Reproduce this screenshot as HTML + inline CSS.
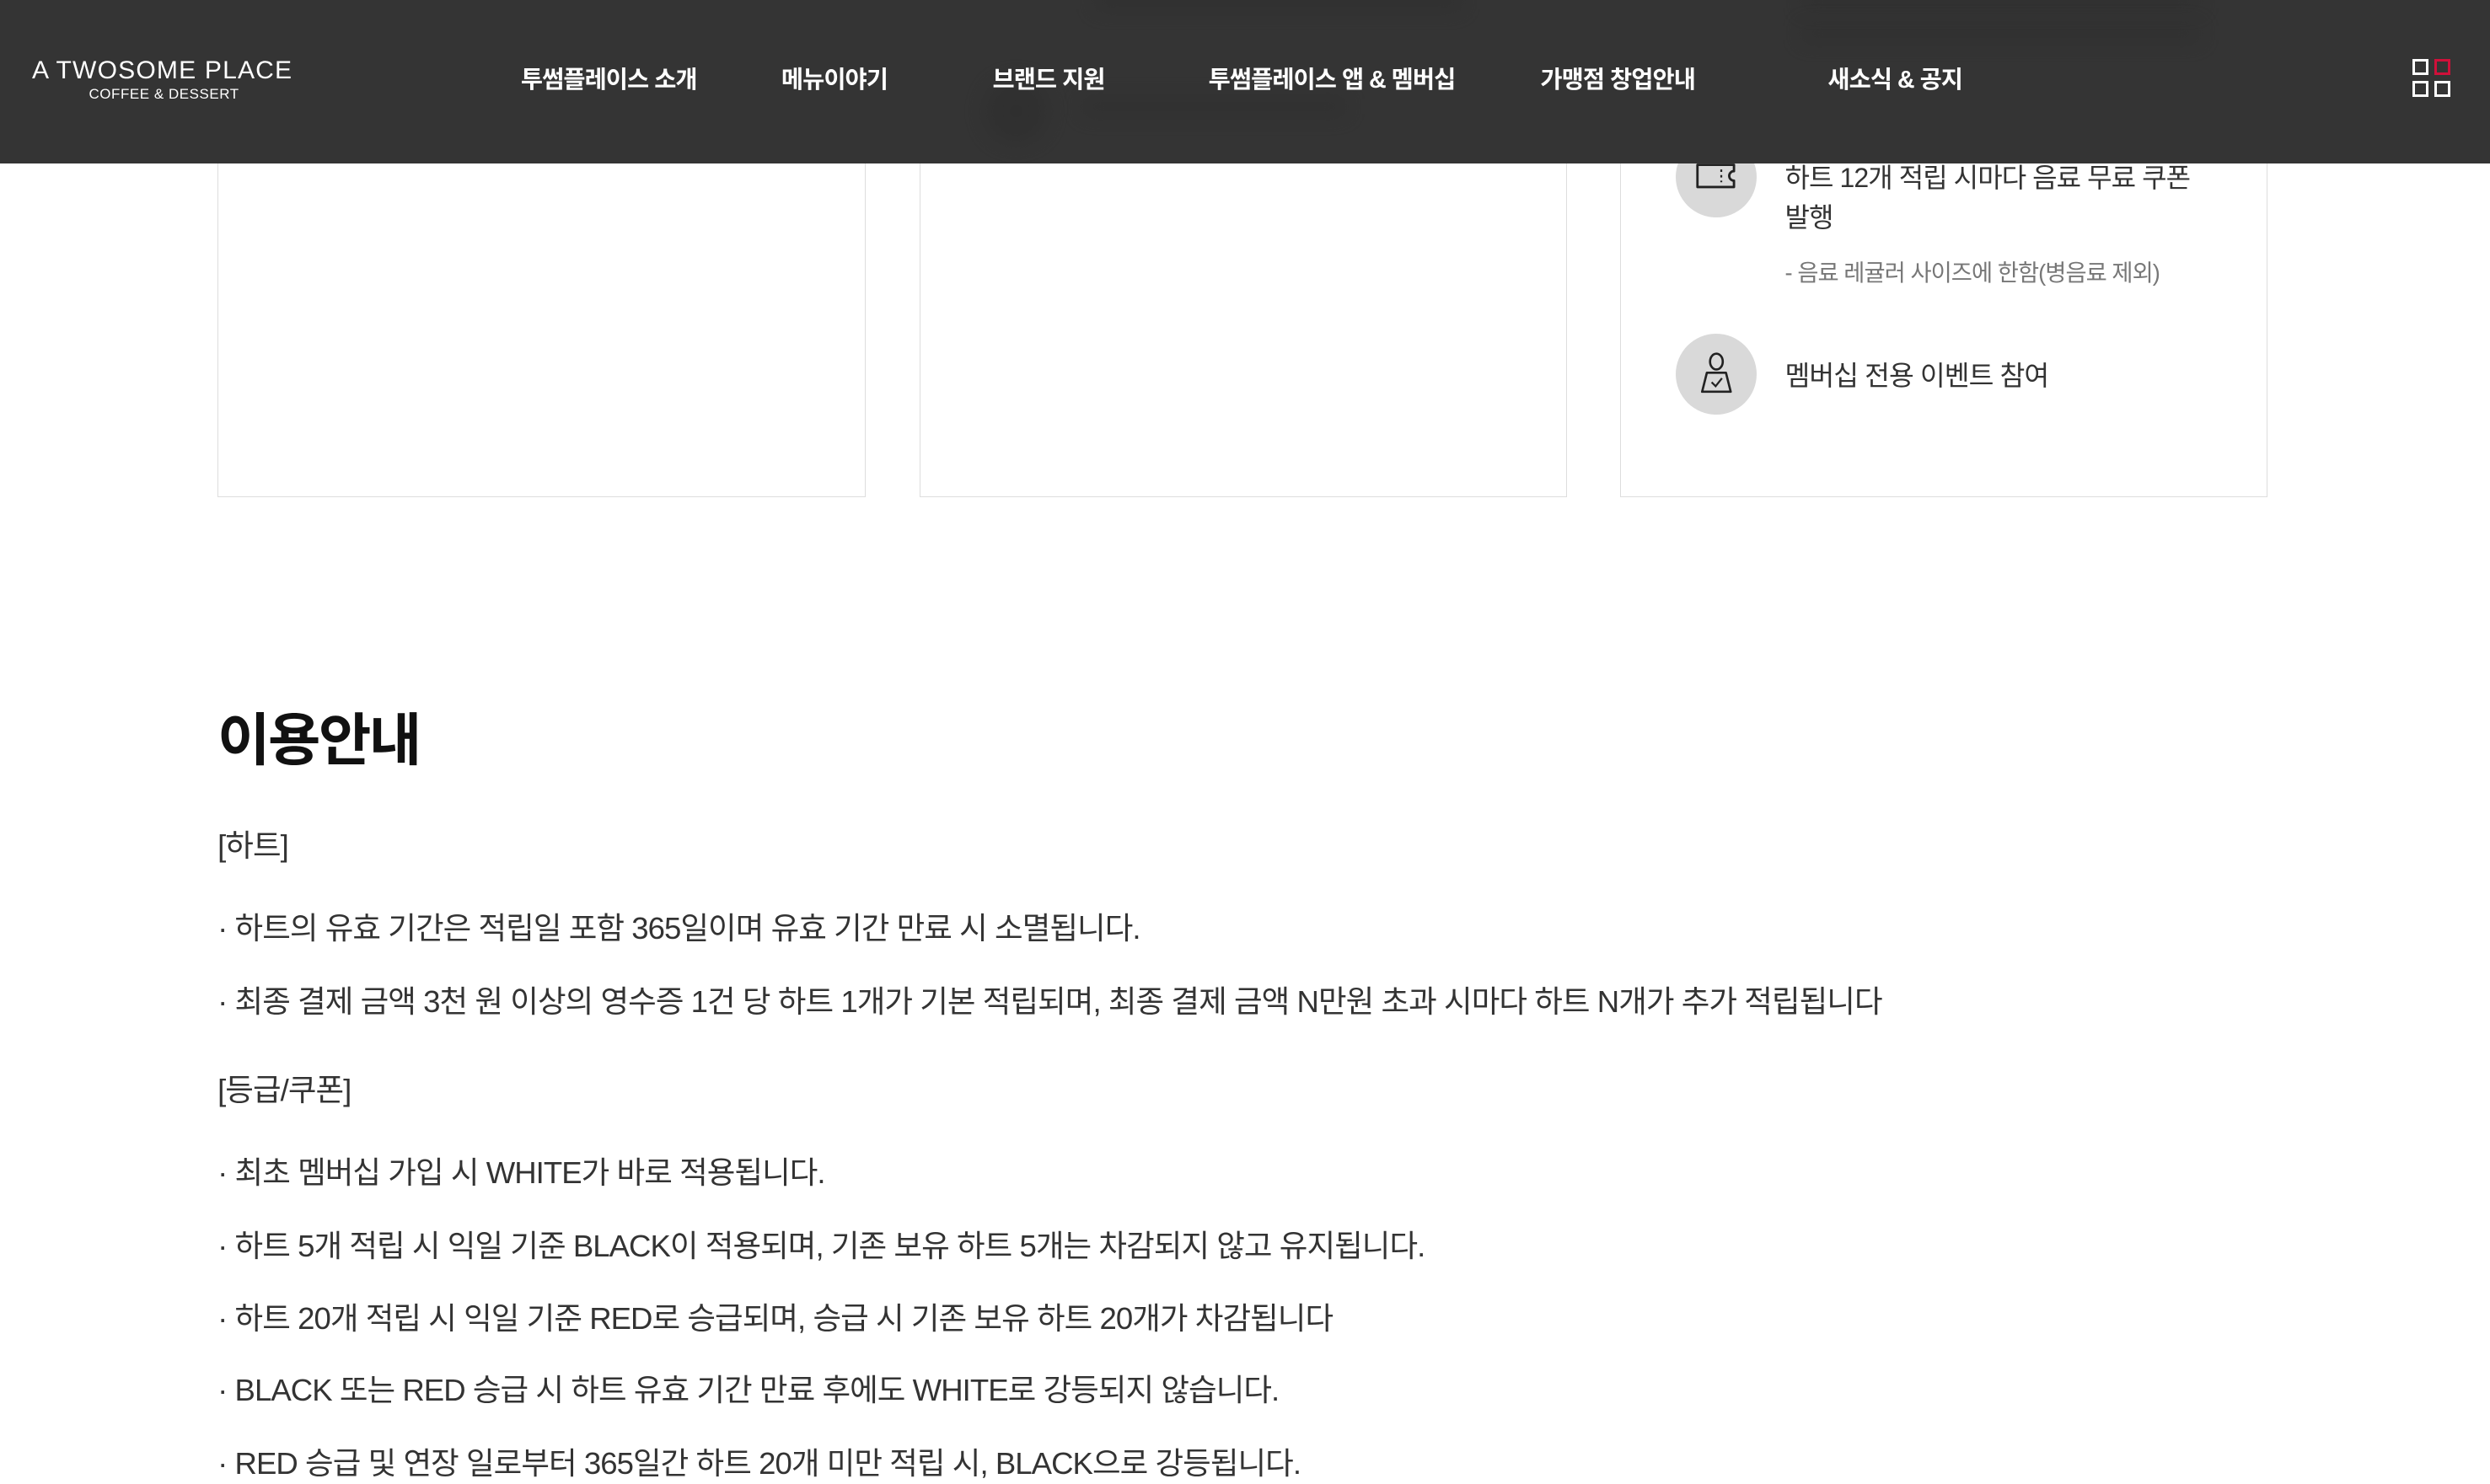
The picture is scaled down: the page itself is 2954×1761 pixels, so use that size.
<!DOCTYPE html>
<html><head><meta charset="utf-8"><style>
html,body{margin:0;padding:0;background:#fff;overflow:hidden}
body{width:1568px;height:935px;zoom:1.88393;position:relative;font-family:"Liberation Sans","Noto Sans CJK KR",sans-serif;color:#333}
.card{position:absolute;top:-20px;height:333px;border:1px solid #ddd;box-sizing:border-box;width:408px}
.hdr{position:absolute;left:0;top:0;width:1568px;height:103px;background:#343434;z-index:5;overflow:hidden}
.nav{position:absolute;top:38px;color:#fff;font-weight:bold;font-size:15.1px;letter-spacing:-0.5px;white-space:nowrap}
.blur{position:absolute;background:#2c2c2c;filter:blur(6px);opacity:.5}
.circ{position:absolute;width:51px;height:51px;border-radius:50%;background:#d9d9d9}
.t{position:absolute;white-space:nowrap;letter-spacing:-0.5px}
.b{font-size:19.4px}
.g{position:absolute;width:10px;height:10px;border:2px solid #fff;box-sizing:border-box}
</style></head><body>
<div class="card" style="left:137px"></div>
<div class="card" style="left:579px"></div>
<div class="card" style="left:1020px;width:408px"></div>

<div class="circ" style="left:1055px;top:86px"></div>
<svg style="position:absolute;left:1067px;top:100px" width="28" height="22" viewBox="0 0 28 22"><path d="M2 4 H25 V8 A3 3 0 0 0 25 14 V18 H2 Z" fill="none" stroke="#222" stroke-width="1.5" stroke-linejoin="round"/><path d="M17 7 V15" stroke="#222" stroke-width="1.2" stroke-dasharray="1.5 2"/></svg>
<div class="t" style="left:1124px;top:100px;font-size:17px;line-height:25px;color:#333">하트 12개 적립 시마다 음료 무료 쿠폰<br>발행</div>
<div class="t" style="left:1124px;top:160px;font-size:14.5px;color:#777">- 음료 레귤러 사이즈에 한함(병음료 제외)</div>
<div class="circ" style="left:1055px;top:210px"></div>
<svg style="position:absolute;left:1066px;top:220px" width="30" height="32" viewBox="0 0 30 32"><ellipse cx="15" cy="8" rx="4" ry="5" fill="none" stroke="#222" stroke-width="1.4"/><path d="M9 15 H21 L24 27 H6 Z" fill="none" stroke="#222" stroke-width="1.4" stroke-linejoin="round"/><path d="M12 21 L14.5 23.5 L18.5 18.5" fill="none" stroke="#222" stroke-width="1.2"/></svg>
<div class="t" style="left:1124px;top:223px;font-size:17.2px;color:#333">멤버십 전용 이벤트 참여</div>

<div class="hdr">
 <div class="blur" style="left:690px;top:-6px;width:230px;height:12px"></div>
 <div class="blur" style="left:1135px;top:-4px;width:250px;height:10px"></div>
 <div class="blur" style="left:1135px;top:16px;width:250px;height:10px"></div>
 <div class="blur" style="left:620px;top:50px;width:40px;height:40px;border-radius:50%"></div>
 <div class="blur" style="left:682px;top:62px;width:165px;height:10px"></div>
 <div class="t" style="left:20px;top:36px;color:#fff;font-size:15.5px;letter-spacing:0.6px;font-family:'Liberation Sans',sans-serif;transform:scaleX(1.03);transform-origin:left">A TWOSOME PLACE</div>
 <div class="t" style="left:56px;top:54px;color:#fff;font-size:9px;letter-spacing:0.3px">COFFEE &amp; DESSERT</div>
 <div class="nav" style="left:328px">투썸플레이스 소개</div>
 <div class="nav" style="left:492px">메뉴이야기</div>
 <div class="nav" style="left:625px">브랜드 지원</div>
 <div class="nav" style="left:761px">투썸플레이스 앱 &amp; 멤버십</div>
 <div class="nav" style="left:970px">가맹점 창업안내</div>
 <div class="nav" style="left:1151px">새소식 &amp; 공지</div>
 <div class="g" style="left:1519px;top:37px"></div>
 <div class="g" style="left:1533px;top:37px;border-color:#d0103a"></div>
 <div class="g" style="left:1519px;top:51px"></div>
 <div class="g" style="left:1533px;top:51px"></div>
</div>

<div class="t" style="left:137px;top:437px;font-size:36px;font-weight:bold;color:#111;letter-spacing:-1.3px">이용안내</div>
<div class="t b" style="left:137px;top:517px">[하트]</div>
<div class="t b" style="left:137px;top:569px">· 하트의 유효 기간은 적립일 포함 365일이며 유효 기간 만료 시 소멸됩니다.</div>
<div class="t b" style="left:137px;top:615px">· 최종 결제 금액 3천 원 이상의 영수증 1건 당 하트 1개가 기본 적립되며, 최종 결제 금액 N만원 초과 시마다 하트 N개가 추가 적립됩니다</div>
<div class="t b" style="left:137px;top:671px">[등급/쿠폰]</div>
<div class="t b" style="left:137px;top:723px">· 최초 멤버십 가입 시 WHITE가 바로 적용됩니다.</div>
<div class="t b" style="left:137px;top:769px">· 하트 5개 적립 시 익일 기준 BLACK이 적용되며, 기존 보유 하트 5개는 차감되지 않고 유지됩니다.</div>
<div class="t b" style="left:137px;top:815px">· 하트 20개 적립 시 익일 기준 RED로 승급되며, 승급 시 기존 보유 하트 20개가 차감됩니다</div>
<div class="t b" style="left:137px;top:860px">· BLACK 또는 RED 승급 시 하트 유효 기간 만료 후에도 WHITE로 강등되지 않습니다.</div>
<div class="t b" style="left:137px;top:906px">· RED 승급 및 연장 일로부터 365일간 하트 20개 미만 적립 시, BLACK으로 강등됩니다.</div>
</body></html>
